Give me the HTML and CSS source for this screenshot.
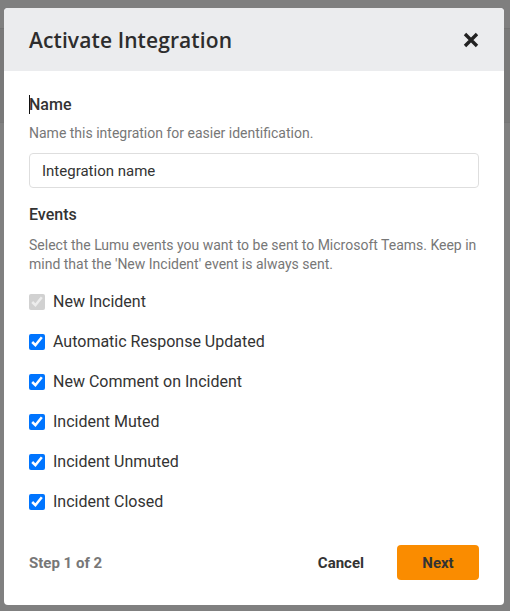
FILE: index.html
```html
<!DOCTYPE html>
<html>
<head>
<meta charset="utf-8">
<link rel="stylesheet" href="styles.css">
</head>
<body>
<div class="page">
  <div class="page-top"></div>
  <div class="page-band"></div>
  <div class="page-rest"></div>
</div>
<div class="modal">
  <div class="modal-header">
    <h1 class="modal-title">Activate Integration</h1>
    <button class="close" aria-label="Close">
      <svg width="16" height="16" viewBox="0 0 16 16"><path d="M2 2 L14 14 M14 2 L2 14" stroke="#222" stroke-width="3.4" fill="none"/></svg>
    </button>
  </div>
  <div class="modal-body">
    <div class="label"><span class="caret"></span>Name</div>
    <p class="help">Name this integration for easier identification.</p>
    <div class="input">Integration name</div>
    <div class="label events">Events</div>
    <p class="help help-events">Select the Lumu events you want to be sent to Microsoft Teams. Keep in mind that the 'New Incident' event is always sent.</p>
    <ul class="checks">
      <li><input type="checkbox" checked disabled><span>New Incident</span></li>
      <li><input type="checkbox" checked><span>Automatic Response Updated</span></li>
      <li><input type="checkbox" checked><span>New Comment on Incident</span></li>
      <li><input type="checkbox" checked><span>Incident Muted</span></li>
      <li><input type="checkbox" checked><span>Incident Unmuted</span></li>
      <li><input type="checkbox" checked><span>Incident Closed</span></li>
    </ul>
  </div>
  <div class="modal-footer">
    <span class="step">Step 1 of 2</span>
    <div class="actions">
      <button class="btn-cancel">Cancel</button>
      <button class="btn-next">Next</button>
    </div>
  </div>
</div>
</body>
</html>
```
FILE: styles.css
```css
* { box-sizing: border-box; }
html, body { margin: 0; padding: 0; }
body {
  width: 510px;
  height: 611px;
  overflow: hidden;
  background: #808080;
  font-family: Roboto, "Liberation Sans", sans-serif;
  position: relative;
}
.page { display: flex; flex-direction: column; }
.page-top { height: 28px; background: #7f7f7f; }
.page-band { height: 95px; background: #797979; border-top: 1px solid #737373; border-bottom: 1px solid #767676; }
.page-rest { flex: 1; background: #808080; }

.modal {
  position: absolute;
  left: 4px;
  top: 8px;
  width: 500px;
  height: 597px;
  background: #fff;
  border-radius: 4px;
  display: flex;
  flex-direction: column;
  overflow: hidden;
}
.modal-header {
  height: 63px;
  flex: none;
  background: #ebecee;
  display: flex;
  align-items: center;
  justify-content: space-between;
  padding: 0 25px 0 25px;
}
.modal-title {
  margin: 0;
  font-family: "Open Sans", sans-serif;
  font-weight: 600;
  font-size: 21px;
  color: #2d2d2d;
  letter-spacing: 0.1px;
}
.close {
  border: 0;
  background: none;
  padding: 0;
  width: 16px;
  height: 16px;
  display: flex;
}
.modal-body {
  padding: 24px 25px 0 25px;
  flex: 1;
}
.label {
  font-size: 16px;
  font-weight: 500;
  color: #333;
  line-height: 19px;
  position: relative;
}
.caret {
  position: absolute;
  left: 0;
  top: 0;
  width: 1px;
  height: 19px;
  background: #111;
}
.help {
  margin: 10px 0 0 0;
  font-size: 14px;
  line-height: 19px;
  color: #777;
}
.help-events { margin-top: 12px; }
.input {
  margin-top: 10px;
  height: 35px;
  border: 1px solid #dedede;
  border-radius: 4px;
  padding: 0 12px;
  display: flex;
  align-items: center;
  font-size: 15px;
  color: #333;
}
.events { margin-top: 17px; }
.checks {
  list-style: none;
  margin: 18px 0 0 0;
  padding: 0;
  display: flex;
  flex-direction: column;
  gap: 21px;
}
.checks li {
  display: flex;
  align-items: center;
  height: 19px;
}
.checks input {
  width: 16px;
  height: 16px;
  margin: 0 8px 0 0;
  accent-color: #0075ff;
}
.checks span {
  font-size: 16px;
  color: #333;
  line-height: 19px;
}
.modal-footer {
  flex: none;
  padding: 0 25px 25px 25px;
  display: flex;
  align-items: center;
  justify-content: space-between;
}
.step {
  font-size: 15px;
  font-weight: 700;
  color: #777;
}
.actions { display: flex; align-items: center; gap: 33px; }
.btn-cancel {
  border: 0;
  background: none;
  padding: 0;
  font-family: Roboto, sans-serif;
  font-size: 15px;
  font-weight: 700;
  color: #333;
}
.btn-next {
  width: 82px;
  height: 35px;
  border: 0;
  border-radius: 4px;
  background: #fa8c00;
  font-family: Roboto, sans-serif;
  font-size: 15px;
  font-weight: 700;
  color: #333;
}
```
